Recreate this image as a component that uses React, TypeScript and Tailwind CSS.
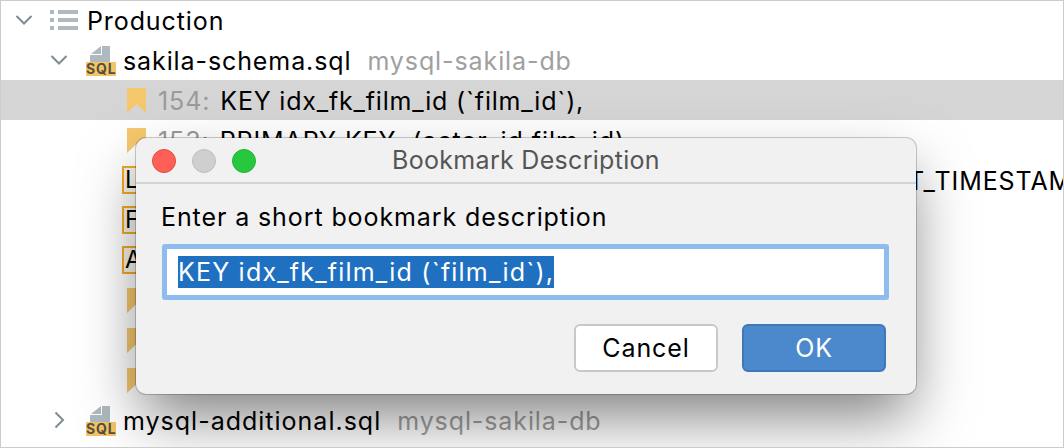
import React from "react";

const font = "font-['Inter','Liberation_Sans',sans-serif]";

const Chevron = ({ open }: { open: boolean }) => (
  <svg width="18" height="18" viewBox="0 0 18 18" fill="none" stroke="#7f8b91" strokeWidth="2" className="shrink-0">
    {open ? <path d="M1.5 5 9 12.500 16.500 5" /> : <path d="M5.500 1.500 13 9l-7.500 7.500" />}
  </svg>
);

const ListIcon = () => (
  <svg width="28" height="20" viewBox="0 0 28 20" fill="#afb9c0" className="shrink-0">
    <rect x="0" y="0" width="4" height="4" />
    <rect x="0" y="8" width="4" height="4" />
    <rect x="0" y="16" width="4" height="4" />
    <rect x="8" y="0" width="20" height="4" />
    <rect x="8" y="8" width="20" height="4" />
    <rect x="8" y="16" width="20" height="4" />
  </svg>
);

const SqlIcon = () => (
  <div className="relative w-[30px] h-[30px] mt-[2px] shrink-0">
    <svg width="30" height="16" viewBox="0 0 30 16" className="absolute left-0 top-0">
      <path d="M5 8 15 0v8z M16 0h8v16H4V9h12z" fill="#afb9c0" />
    </svg>
    <div className="absolute left-0 bottom-0 w-[30px] h-[14px] bg-[#f4c567] text-[#55503f] text-[14px] leading-[14px] font-bold text-center tracking-[0.8px]">
      SQL
    </div>
  </div>
);

const Bookmark = () => (
  <svg width="19" height="25" viewBox="0 0 19 25" className="shrink-0">
    <path d="M0 0h19v25l-9.500-9L0 25z" fill="#f6c86e" />
  </svg>
);

const Tag = ({ letter }: { letter: string }) => (
  <div className="w-[18px] h-[28px] border-2 border-[#f0ab28] bg-[#f8f4e8] text-[24px] leading-[24px] pl-[1px] overflow-hidden shrink-0">
    {letter}
  </div>
);

const Row = ({ className = "", children }: { className?: string; children?: React.ReactNode }) => (
  <div className={`h-[40px] shrink-0 flex items-center whitespace-nowrap ${className}`}>{children}</div>
);

export default function App() {
  return (
    <div className={`relative w-[1064px] h-[448px] overflow-hidden bg-white text-[25px] tracking-[0.9px] text-black border border-[#cccccc] ${font}`}>
      <div className="flex flex-col -mt-[1px]">
        <Row className="pl-[14px]">
          <Chevron open />
          <div className="ml-[17px]">
            <ListIcon />
          </div>
          <span className="ml-[9px] mt-[3px]">Production</span>
        </Row>
        <Row className="pl-[49px]">
          <Chevron open />
          <div className="ml-[18px]">
            <SqlIcon />
          </div>
          <span className="ml-[7px] mt-[3px]">sakila-schema.sql</span>
          <span className="ml-[16px] mt-[3px] text-[#a0a0a0]">mysql-sakila-db</span>
        </Row>
        <Row className="pl-[126px] bg-[#d5d5d5]">
          <Bookmark />
          <span className="ml-[12px] mt-[3px] text-[#9a9a9a]">154:</span>
          <span className="ml-[10px] mt-[3px] tracking-[0.8px]">KEY idx_fk_film_id (`film_id`),</span>
        </Row>
        <Row className="pl-[126px]">
          <Bookmark />
          <span className="ml-[12px] mt-[3px] text-[#9a9a9a]">153:</span>
          <span className="ml-[10px] mt-[3px] whitespace-pre">PRIMARY KEY  (actor_id,film_id)</span>
        </Row>
        <Row className="pl-[121px]">
          <Tag letter="L" />
          <span className="ml-[768px] mt-[3px]">T_TIMESTAMP</span>
        </Row>
        <Row className="pl-[121px]">
          <Tag letter="F" />
        </Row>
        <Row className="pl-[121px]">
          <Tag letter="A" />
        </Row>
        <Row className="pl-[126px]">
          <Bookmark />
        </Row>
        <Row className="pl-[126px]">
          <Bookmark />
        </Row>
        <Row className="pl-[126px]">
          <Bookmark />
        </Row>
        <Row className="pl-[49px]">
          <Chevron open={false} />
          <div className="ml-[18px]">
            <SqlIcon />
          </div>
          <span className="ml-[7px] mt-[3px] tracking-[1px]">mysql-additional.sql</span>
          <span className="ml-[16px] mt-[3px] text-[#a0a0a0]">mysql-sakila-db</span>
        </Row>
      </div>

      {/* bookmark description dialog */}
      <div className="absolute left-[135px] top-[137px] w-[780px] h-[256px] rounded-[10px] bg-[#f1f1f1] shadow-[0_0_0_1px_rgba(0,0,0,0.2),0_28px_60px_-6px_rgba(0,0,0,0.5)] flex flex-col">
        <div className="relative h-[46px] shrink-0 flex items-center justify-center border-b-2 border-[#d3d3d3] text-[#555555] tracking-[0.3px]">
          <div className="absolute left-[16px] top-[11px] flex gap-[16px]">
            <div className="w-[24px] h-[24px] rounded-full bg-[#fe5f57] border border-[#e5483f]" />
            <div className="w-[24px] h-[24px] rounded-full bg-[#cfcfcf] border border-[#bdbdbd]" />
            <div className="w-[24px] h-[24px] rounded-full bg-[#27c83f] border border-[#1eb532]" />
          </div>
          <span className="pt-[2px]">Bookmark Description</span>
        </div>
        <div className="pl-[25px] mt-[19px] leading-[28px]">Enter a short bookmark description</div>
        <div className="ml-[26px] mt-[13px] w-[727px] h-[56px] border-[5px] border-[#8fbcee] rounded-[3px] bg-white flex items-center pl-[11px]">
          <span className="bg-[#1f70c1] text-white h-[32px] leading-[33px] whitespace-nowrap tracking-[1.2px]">KEY idx_fk_film_id (`film_id`),</span>
        </div>
        <div className="flex justify-end gap-[24px] mt-[24px] pr-[30px]">
          <button className="w-[144px] h-[48px] pt-[2px] rounded-[6px] bg-white border-2 border-[#c8c8c8] text-black">Cancel</button>
          <button className="w-[144px] h-[48px] pt-[2px] rounded-[6px] bg-[#4c89cc] border-2 border-[#3f77b8] text-white">OK</button>
        </div>
      </div>
    </div>
  );
}
